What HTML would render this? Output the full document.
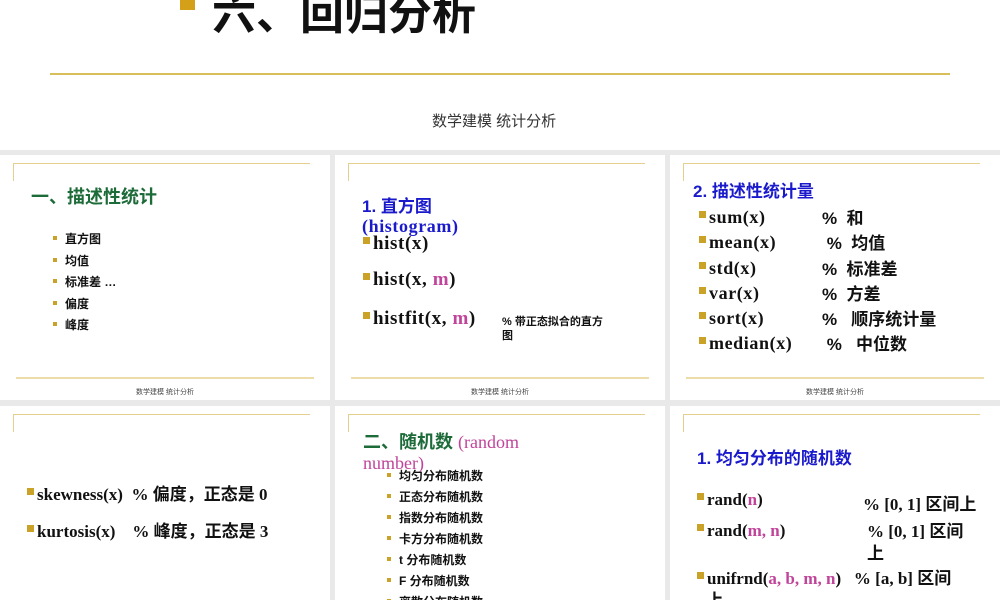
<!DOCTYPE html>
<html><head><meta charset="utf-8"><style>
*{margin:0;padding:0;box-sizing:border-box}
body{width:1000px;height:600px;overflow:hidden;background:#e9e9e9;position:relative;font-family:"Liberation Sans","Noto Sans CJK SC",sans-serif}
.a{position:absolute;white-space:nowrap}
.s{position:absolute;background:#fff;overflow:hidden}
.tl{position:absolute;left:13px;top:8px;right:20px;height:18px;border-top:1px solid #e4cf8e;border-left:1px solid #e4cf8e}
.bl{position:absolute;left:16px;right:16px;top:222px;border-top:2px solid #ecdca8}
.ft{position:absolute;left:0;right:0;top:232px;text-align:center;font-size:7px;color:#444}
.b{display:inline-block;width:7px;height:7px;background:#c9a227;margin-right:3px;vertical-align:5px}
.sb{display:inline-block;width:4px;height:4px;background:#c9a227;margin-right:8px;vertical-align:3px}
.cj{font-weight:bold;font-family:"Liberation Sans","Noto Sans CJK SC",sans-serif;letter-spacing:0}
.ser{font-family:"Liberation Serif","Noto Sans CJK SC",serif;font-weight:bold;letter-spacing:.6px}
.m{color:#c0449a}
.g{color:#1e6b3a}
.bu{color:#1a1acc}
</style></head><body>
<div class="s" style="left:0;top:0;width:1000px;height:150px">
<div class="a" style="left:180px;top:0;width:15px;height:10px;background:#d4a017"></div>
<div class="a cj" style="left:212px;top:-22px;font-size:44px;color:#111">六、回归分析</div>
<div class="a" style="left:50px;top:73px;width:900px;height:2px;background:#d9bf5a"></div>
<div class="a" style="left:432px;top:110px;font-size:15px;color:#333">数学建模 统计分析</div>
</div>

<div class="s" style="left:0;top:155px;width:330px;height:245px">
<div class="tl"></div>
<div class="a cj g" style="left:31px;top:28px;font-size:18px">一、描述性统计</div>
<div class="a cj" style="left:53px;top:74px;font-size:12px;line-height:21.5px;color:#111">
<div><span class="sb"></span>直方图</div><div><span class="sb"></span>均值</div><div><span class="sb"></span>标准差 …</div><div><span class="sb"></span>偏度</div><div><span class="sb"></span>峰度</div></div>
<div class="bl"></div><div class="ft">数学建模 统计分析</div>
</div>

<div class="s" style="left:335px;top:155px;width:330px;height:245px">
<div class="tl"></div>
<div class="a cj bu" style="left:27px;top:37px;font-size:17px">1. 直方图</div>
<div class="a ser bu" style="left:27px;top:61px;font-size:18px">(histogram)</div>
<div class="a ser" style="left:28px;top:78px;font-size:19px;color:#111"><span class="b"></span>hist(x)</div>
<div class="a ser" style="left:28px;top:114px;font-size:19px;color:#111"><span class="b"></span>hist(x, <span class="m">m</span>)</div>
<div class="a ser" style="left:28px;top:153px;font-size:19px;color:#111"><span class="b"></span>histfit(x, <span class="m">m</span>)</div>
<div class="a cj" style="left:167px;top:160px;font-size:11px;line-height:14px;color:#111">% 带正态拟合的直方<br>图</div>
<div class="bl"></div><div class="ft">数学建模 统计分析</div>
</div>

<div class="s" style="left:670px;top:155px;width:330px;height:245px">
<div class="tl"></div>
<div class="a cj bu" style="left:23px;top:22px;font-size:17px">2. 描述性统计量</div>
<div class="a ser" style="left:29px;top:50px;font-size:18px;line-height:25.3px;color:#111">
<div><span class="b"></span>sum(x)</div><div><span class="b"></span>mean(x)</div><div><span class="b"></span>std(x)</div><div><span class="b"></span>var(x)</div><div><span class="b"></span>sort(x)</div><div><span class="b"></span>median(x)</div></div>
<div class="a cj" style="left:152px;top:51px;font-size:17px;line-height:25.3px;color:#111">
<div>% &nbsp;和</div><div>&nbsp;% &nbsp;均值</div><div>% &nbsp;标准差</div><div>% &nbsp;方差</div><div>% &nbsp; 顺序统计量</div><div>&nbsp;% &nbsp; 中位数</div></div>
<div class="bl"></div><div class="ft">数学建模 统计分析</div>
</div>

<div class="s" style="left:0;top:406px;width:330px;height:194px">
<div class="tl"></div>
<div class="a ser" style="left:27px;top:74px;font-size:17px;color:#111;letter-spacing:0"><span class="b"></span>skewness(x) &nbsp;% <span class="cj">偏度，正态是</span> 0</div>
<div class="a ser" style="left:27px;top:111px;font-size:17px;color:#111;letter-spacing:0"><span class="b"></span>kurtosis(x) &nbsp;&nbsp;&nbsp;% <span class="cj">峰度，正态是</span> 3</div>
</div>

<div class="s" style="left:335px;top:406px;width:330px;height:194px">
<div class="tl"></div>
<div class="a cj g" style="left:28px;top:22px;font-size:18px">二、随机数 <span class="ser m" style="font-weight:normal;letter-spacing:0">(random</span></div>
<div class="a ser m" style="left:28px;top:47px;font-size:18px;font-weight:normal;letter-spacing:0">number)</div>
<div class="a cj" style="left:52px;top:60px;font-size:12px;line-height:21px;color:#111">
<div><span class="sb"></span>均匀分布随机数</div><div><span class="sb"></span>正态分布随机数</div><div><span class="sb"></span>指数分布随机数</div><div><span class="sb"></span>卡方分布随机数</div><div><span class="sb"></span>t 分布随机数</div><div><span class="sb"></span>F 分布随机数</div><div><span class="sb"></span>离散分布随机数</div></div>
</div>

<div class="s" style="left:670px;top:406px;width:330px;height:194px">
<div class="tl"></div>
<div class="a cj bu" style="left:27px;top:38px;font-size:17px">1. 均匀分布的随机数</div>
<div class="a ser" style="left:27px;top:84px;font-size:17px;color:#111;letter-spacing:0"><span class="b"></span>rand(<span class="m">n</span>)</div>
<div class="a ser" style="left:193px;top:84px;font-size:17px;color:#111;letter-spacing:0">% [0, 1] <span class="cj">区间上</span></div>
<div class="a ser" style="left:27px;top:115px;font-size:17px;color:#111;letter-spacing:0"><span class="b"></span>rand(<span class="m">m, n</span>)</div>
<div class="a ser" style="left:197px;top:115px;font-size:17px;line-height:22px;color:#111;letter-spacing:0">% [0, 1] <span class="cj">区间</span><br><span class="cj">上</span></div>
<div class="a ser" style="left:27px;top:162px;font-size:17px;line-height:22px;color:#111;letter-spacing:0"><span class="b"></span>unifrnd(<span class="m">a, b, m, n</span>) &nbsp;&nbsp;% [a, b] <span class="cj">区间</span><br><span class="cj">&nbsp;&nbsp;上</span></div>
</div>
</body></html>
